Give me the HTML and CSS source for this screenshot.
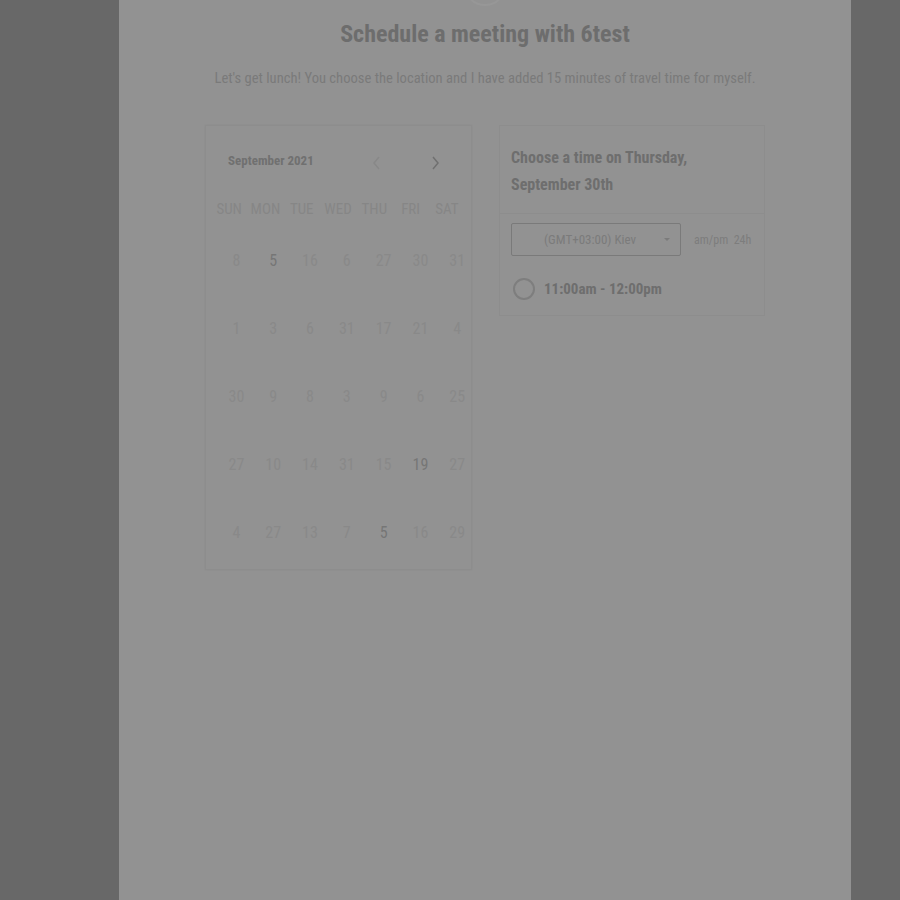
FILE: index.html
```html
<!DOCTYPE html>
<html>
<head>
<meta charset="utf-8">
<link rel="stylesheet" href="styles.css">
</head>
<body>
<div class="panel">
  <div class="avatar"></div>
  <h1 class="title">Schedule a meeting with 6test</h1>
  <p class="subtitle">Let's get lunch! You choose the location and I have added 15 minutes of travel time for myself.</p>
  <div class="content">
    <div class="calendar">
      <div class="cal-head">
        <span class="month">September 2021</span>
        <span class="nav prev"><svg width="10" height="16" viewBox="0 0 10 16"><path d="M8 2 L3 8 L8 14" fill="none" stroke="currentColor" stroke-width="1.5"/></svg></span>
        <span class="nav next"><svg width="10" height="16" viewBox="0 0 10 16"><path d="M2 2 L7 8 L2 14" fill="none" stroke="currentColor" stroke-width="1.5"/></svg></span>
      </div>
      <div class="weekdays">
        <span>SUN</span><span>MON</span><span>TUE</span><span>WED</span><span>THU</span><span>FRI</span><span>SAT</span>
      </div>
      <div class="days">
        <span>8</span><span class="on">5</span><span>16</span><span>6</span><span>27</span><span>30</span><span>31</span>
        <span>1</span><span>3</span><span>6</span><span>31</span><span>17</span><span>21</span><span>4</span>
        <span>30</span><span>9</span><span>8</span><span>3</span><span>9</span><span>6</span><span>25</span>
        <span>27</span><span>10</span><span>14</span><span>31</span><span>15</span><span class="on">19</span><span>27</span>
        <span>4</span><span>27</span><span>13</span><span>7</span><span class="on">5</span><span>16</span><span>29</span>
      </div>
    </div>
    <div class="times">
      <div class="times-head">Choose a time on Thursday, September 30th</div>
      <div class="times-body">
        <div class="tz-row">
          <div class="select"><span class="select-text">(GMT+03:00) Kiev</span><span class="caret"></span></div>
          <span class="fmt">am/pm&nbsp; 24h</span>
        </div>
        <div class="slot"><span class="radio"></span><span class="slot-text">11:00am - 12:00pm</span></div>
      </div>
    </div>
  </div>
</div>
</body>
</html>
```
FILE: styles.css
```css
html, body {
  margin: 0;
  padding: 0;
  background: #686868;
  height: 900px;
  overflow: hidden;
}
body {
  font-family: "Roboto Condensed", Roboto, "Liberation Sans", sans-serif;
  font-stretch: 80%;
}
.panel {
  margin-left: 119px;
  width: 732px;
  min-height: 900px;
  background: #929292;
  display: flex;
  flex-direction: column;
  align-items: center;
}
.avatar {
  width: 40px;
  height: 40px;
  border-radius: 50%;
  border: 2px solid #979797;
  margin-top: -38px;
}
.title {
  margin: 12px 0 0;
  font-size: 24px;
  line-height: 32px;
  font-weight: 700;
  color: #6d6d6d;
}
.subtitle {
  margin: 18px 0 0;
  font-size: 14.6px;
  line-height: 20px;
  color: #7a7a7a;
}
.content {
  display: flex;
  gap: 27px;
  margin-top: 37px;
  align-items: flex-start;
}
.calendar {
  width: 265px;
  height: 443px;
  border: 1px solid #8d8d8d;
  box-shadow: 0 0 2px rgba(0,0,0,0.05);
}
.cal-head {
  display: flex;
  align-items: center;
  height: 30px;
  margin-top: 19px;
  padding-left: 22px;
}
.month {
  font-size: 13px;
  font-weight: 700;
  color: #707070;
  width: 142px;
}
.nav {
  display: flex;
  width: 10px;
  height: 16px;
  margin-top: 6px;
}
.prev { color: #888888; margin-left: 1px; }
.next { color: #707070; margin-left: 50px; }
.weekdays, .days {
  display: grid;
}
.weekdays {
  grid-template-columns: repeat(7, 36.3px);
  padding-left: 5px;
  margin-top: 24px;
  height: 20px;
  align-items: center;
}
.weekdays span {
  text-align: center;
  font-size: 15px;
  color: #868686;
}
.days {
  grid-template-columns: repeat(7, 36.8px);
  padding-left: 12px;
  margin-top: 18px;
  grid-auto-rows: 68px;
}
.days span {
  text-align: center;
  font-size: 16px;
  line-height: 48px;
  color: #898989;
}
.days span.on { color: #767676; font-weight: 400; }
.times {
  width: 266px;
}
.times-head {
  border: 1px solid #8d8d8d;
  padding: 18px 60px 15px 11px;
  font-size: 16px;
  line-height: 27px;
  font-weight: 700;
  color: #6e6e6e;
}
.times-body {
  border: 1px solid #8d8d8d;
  border-top: 0;
  height: 92px;
  padding: 9px 0 0 11px;
}
.tz-row {
  display: flex;
  align-items: center;
}
.select {
  width: 168px;
  height: 31px;
  border: 1px solid #7a7a7a;
  border-radius: 2px;
  display: flex;
  align-items: center;
  position: relative;
}
.select-text {
  margin-left: 32px;
  font-size: 13px;
  color: #7b7b7b;
}
.caret {
  position: absolute;
  right: 10px;
  top: 14px;
  width: 0;
  height: 0;
  border-left: 3px solid transparent;
  border-right: 3px solid transparent;
  border-top: 3px solid #7b7b7b;
}
.fmt {
  margin-left: 13px;
  font-size: 12px;
  color: #7d7d7d;
}
.slot {
  display: flex;
  align-items: center;
  margin-top: 22px;
  margin-left: 2px;
}
.radio {
  width: 18px;
  height: 18px;
  border: 2px solid #7e7e7e;
  border-radius: 50%;
}
.slot-text {
  margin-left: 9px;
  font-size: 15px;
  font-weight: 700;
  color: #6e6e6e;
}
```
